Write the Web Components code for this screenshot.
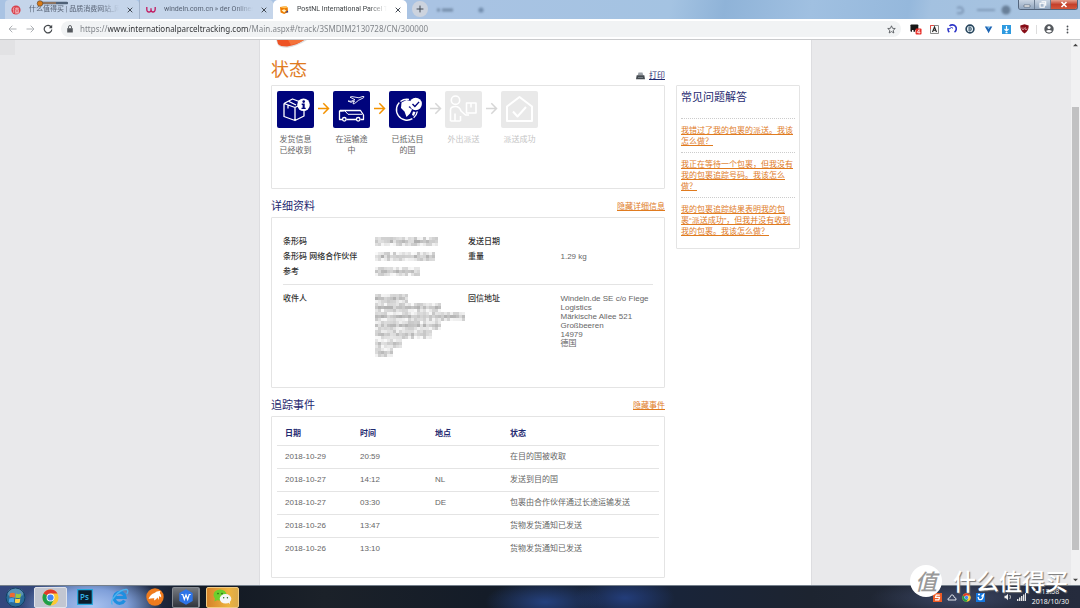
<!DOCTYPE html>
<html lang="zh-CN">
<head>
<meta charset="utf-8">
<title>PostNL International Parcel Tracking</title>
<style>
html,body{margin:0;height:100%}
body{font:8px/11px "Liberation Sans","Noto Sans CJK SC",sans-serif;color:#666;overflow:hidden;
--navy:#1f2a70;--orange:#e07b1f;--line:#e4e4e4;--ui:"Open Sans","Noto Sans CJK SC",sans-serif}
</style>
</head>
<body>
<desktop-screen></desktop-screen>
<script>
function define(name, html, after) {
  const tpl = document.createElement('template');
  tpl.innerHTML = '<style>*{box-sizing:border-box}:host{display:block;box-sizing:border-box}</style>' + html;
  customElements.define(name, class extends HTMLElement {
    constructor() {
      super();
      this.attachShadow({mode: 'open'}).append(tpl.content.cloneNode(true));
    }
    connectedCallback() { if (after) after.call(this, this.shadowRoot); }
  });
}

/* ---------- browser chrome ---------- */
define('browser-tab', `
<style>
:host{flex:0 0 134px;min-width:0;height:19px;display:flex;align-items:center;gap:8px;padding:0 6px 0 6px;color:#566173;font:7px/11px Roboto,"Noto Sans CJK SC",sans-serif;background:#c5d5ea;border-radius:4px 4px 0 0}
:host([active]){background:#fff;color:#3c4043;border-radius:5px 5px 0 0;z-index:1}
:host([divided]){border-left:1px solid #a3b4cc;border-radius:0 4px 0 0}
::slotted(svg){flex:none;width:10px;height:10px}
.t{flex:1;min-width:0;overflow:hidden;white-space:nowrap;-webkit-mask-image:linear-gradient(90deg,#000 80%,transparent);mask-image:linear-gradient(90deg,#000 80%,transparent)}
button{all:unset;flex:none;width:6px;height:11px;display:flex;align-items:center}
button svg{width:6px;height:6px}
</style>
<slot name="icon"></slot><span class="t"><slot></slot></span>
<button aria-label="关闭"><svg viewBox="0 0 6 6"><path d="M.7.7l4.6 4.6M5.3.7L.7 5.3" stroke="#444b55" stroke-width="1"/></svg></button>`);

define('tab-strip', `
<style>
:host{position:relative;flex:none;height:19px;display:flex;padding-left:5px;background:linear-gradient(100deg,#a9c3e3 0 40%,#a4c3e2 62%,#8fb3d8 67%,#a0c0e1 75%,#95b8dc 84%,#a3c1e0 86%,#a9c4e0)}
.new{all:unset;width:16px;height:16px;margin:1px 0 0 5px;border-radius:8px;background:#ccd3de;display:flex;align-items:center;justify-content:center}
.ghost{display:flex;align-items:center;gap:24px;margin-left:8px;filter:blur(1px);opacity:.5}
.ghost svg{display:block}
.g2{margin-left:auto;margin-right:6px}
.win{display:flex;height:10px;margin-right:2px;border:1px solid #53657c;border-top:0;border-radius:0 0 3px 3px;overflow:hidden}
.win button{all:unset;width:15px;display:flex;align-items:center;justify-content:center;background:linear-gradient(#c9d5e3,#91a6bf);border-right:1px solid #6d7e93}
.win .x{width:26px;background:linear-gradient(#e3a08f,#c4402b 50%,#d2563b);border:0}
.recorder{position:absolute;left:36px;top:0;width:32px;height:7px}
</style>
<browser-tab><svg slot="icon" viewBox="0 0 10 10"><circle cx="5" cy="5" r="4.6" fill="#d8404b"/><path d="M3.2 2.2L2 4.6M2.7 4v3.8M4 3.3h4M5.9 2.3v1.6M4.6 4.6h2.8v2.8H4.6zM4.6 6h2.8M4 8.1h4.2" stroke="#fbdcdf" stroke-width=".6" fill="none"/></svg>什么值得买 | 品质消费网站_网购导购</browser-tab>
<browser-tab divided><svg slot="icon" viewBox="0 0 10 10"><path d="M.8 2v2.2Q.8 7 3 7T5 4.5V3.2M5 4.5Q5 7 7 7t2.2-2.8V2" stroke="#c2185f" stroke-width="1.3" fill="none"/></svg>windeln.com.cn » der Onlineshop</browser-tab>
<browser-tab active><svg slot="icon" viewBox="0 0 10 10"><path d="M1 2l6-.8 1.7 1.4L9 7 5.2 9 1.6 7.6z" fill="#ef7d00"/><path d="M1 2.2l4.6 1L8.8 2.6 7 1z" fill="#ffc35b"/><path d="M2.6 5.2l2.6-1 2 1.2-2 2z" fill="#fff3c7"/><path d="M6 7.5l3-2 .2 2z" fill="#2d3a8c"/></svg>PostNL International Parcel Tracking</browser-tab>
<button class="new" aria-label="新标签页"><svg width="8" height="8" viewBox="0 0 8 8"><path d="M4 .6v6.8M.6 4h6.8" stroke="#3e4650"/></svg></button>
<div class="ghost"><svg width="18" height="6" viewBox="0 0 18 6"><path d="M1 3h3M6 3h11" stroke="#40566f" stroke-width="3"/></svg><svg width="6" height="6"><circle cx="3" cy="3" r="2.6" fill="#3f5a7a"/></svg></div>
<div class="ghost g2"><svg width="56" height="10" viewBox="0 0 56 10"><path d="M1 3q5-2 6 2t-6 3M21 5h18" stroke="#5c7290" stroke-width="2" fill="none"/><circle cx="50" cy="5" r="4.5" fill="#2c3d52"/></svg></div>
<div class="win"><button aria-label="最小化"><svg width="8" height="6"><path d="M1 3h6v2H1z" fill="#fff" stroke="#4b586a" stroke-width=".6"/></svg></button><button aria-label="还原"><svg width="8" height="7"><path d="M2.5.8h4.2v4M1 2.3h4.2v4H1z" fill="none" stroke="#fff" stroke-width="1.1"/></svg></button><button class="x" aria-label="关闭"><svg width="8" height="7"><path d="M1.5 1l5 5M6.500 1l-5 5" stroke="#fff" stroke-width="1.6"/></svg></button></div>
<svg class="recorder" viewBox="0 0 32 7"><path d="M4 3h27" stroke="#4e6076" stroke-width="2.4" stroke-linecap="round"/><path d="M6 3h14" stroke="#b98053" stroke-width="1.2"/><circle cx="4" cy="3.500" r="2.8" fill="#d97a17" stroke="#50402f" stroke-width=".6"/></svg>`);

define('address-bar', `
<style>
:host{flex:none;height:21px;display:flex;align-items:center;gap:6px;padding:0 7px 0 6px;background:#fff;border-bottom:1px solid #c9cacc}
button{all:unset;flex:none;width:12px;height:12px;display:flex;align-items:center;justify-content:center}
svg{display:block}
.box{flex:1;display:flex;align-items:center;height:16px;margin-left:1px;border-radius:8px;background:#f1f3f4;padding:0 4px 0 6px}
label{display:flex;width:13px}
input{all:unset;flex:1;min-width:0;height:14px;font:8px/14px "Noto Sans",sans-serif;color:#5f6368;
background:linear-gradient(90deg,#7b7f84 28px,#2b2d30 28px 168px,#7b7f84 168px);-webkit-background-clip:text;background-clip:text;-webkit-text-fill-color:transparent}
.ext{display:flex;gap:6px;align-items:center;padding-left:3px}
.ext .sep{width:1px;height:9px;background:#ddd}
</style>
<button aria-label="后退"><svg width="9" height="8" viewBox="0 0 9 8"><path d="M8.500 4H1M4.300.7L1 4l3.300 3.300" fill="none" stroke="#aeb1b5"/></svg></button>
<button aria-label="前进"><svg width="9" height="8" viewBox="0 0 9 8"><path d="M.5 4H8M4.700.7L8 4 4.700 7.300" fill="none" stroke="#aeb1b5"/></svg></button>
<button aria-label="刷新"><svg width="10" height="10" viewBox="0 0 10 10"><path d="M8.200 3A3.800 3.800 0 1 0 8.800 5.500" fill="none" stroke="#44484c" stroke-width="1.200"/><path d="M9.200.8v3.400H5.800z" fill="#44484c"/></svg></button>
<div class="box">
<label for="u" aria-label="网址"><svg width="6" height="8" viewBox="0 0 6 8"><path d="M.2 3.200h5.600v4.300H.2z" fill="#55595e"/><path d="M1.500 3.400V2a1.500 1.500 0 0 1 3 0v1.400" fill="none" stroke="#55595e" stroke-width=".9"/></svg></label>
<input id="u" value="https://www.internationalparceltracking.com/Main.aspx#/track/3SMDIM2130728/CN/300000">
<button aria-label="收藏"><svg width="9" height="9" viewBox="0 0 10 10"><path d="M5 .9l1.200 2.800 3 .2-2.300 2 .7 3L5 7.300 2.400 8.900l.7-3-2.300-2 3-.2z" fill="none" stroke="#4a4e53" stroke-width=".9"/></svg></button>
</div>
<div class="ext">
<button aria-label="扩展 1"><svg width="13" height="12" viewBox="0 0 13 12"><rect x=".5" y="1" width="8.500" height="8" rx="1" fill="#161616"/><path d="M2.200 7v2.200h1.600V7zM5.500 7v2.200h1.300V7z" fill="#fff"/><rect x="6" y="5.500" width="6.500" height="6.500" rx="1" fill="#e8302a"/><path d="M9.900 6.500v4.600M9.900 6.700L7.700 9.700h3.600" stroke="#fff" stroke-width=".8" fill="none"/></svg></button>
<button aria-label="扩展 2"><svg width="9" height="9" viewBox="0 0 9 9"><path d="M.5.5h8v8h-8z" fill="#fafafa" stroke="#8b8b8b"/><path d="M.5 4V.5H4" stroke="#e34b42" fill="none"/><path d="M2.500 7l2-5 2 5M3.200 5.300h2.600" stroke="#222" stroke-width="1.100" fill="none"/></svg></button>
<button aria-label="扩展 3"><svg width="10" height="10" viewBox="0 0 10 10"><path d="M2.300 8.200A4 4 0 0 1 1.300 4M2.500 2A4 4 0 1 1 7.500 8.200" fill="none" stroke="#2d35c8" stroke-width="1.600"/><path d="M2 5l2.500-1.500L6 4.300" stroke="#2d35c8" stroke-width="1" fill="none"/></svg></button>
<button aria-label="扩展 4"><svg width="10" height="10" viewBox="0 0 10 10"><circle cx="5" cy="5" r="3.900" fill="#e7f1f6" stroke="#26445c" stroke-width="1.600"/><path d="M4 3h1.500L6.500 5 5.500 7H4M4 3v4M4 5h2" stroke="#26445c" fill="none" stroke-width=".8"/></svg></button>
<button aria-label="扩展 5"><svg width="9" height="9" viewBox="0 0 9 9"><path d="M.8 1.500h2.700L4.600 4l1.200-2.500h2.500L5.500 6.500 4.600 8.200 3.700 6.500z" fill="#1d65b4"/><circle cx="4.600" cy="2.300" r="1.100" fill="#71b7ea"/></svg></button>
<button aria-label="扩展 6"><svg width="9" height="9" viewBox="0 0 9 9"><path d="M0 0h9v9H0z" fill="#2d9ae0"/><path d="M4.500 1v4.500M2.500 4l2 2 2-2M3.500 7.700h2" stroke="#fff" stroke-width="1.200" fill="none"/></svg></button>
<button aria-label="扩展 7"><svg width="9" height="10" viewBox="0 0 9 10"><path d="M4.500.3L8.700 1.600q.2 5.600-4.200 8Q.1 7.200.3 1.600z" fill="#870d17"/><path d="M2 3.500v1.200q0 1 1 1t1-1V3.500M7 4.600a1 1 0 1 1-1-1" stroke="#e4b6b9" stroke-width=".8" fill="none"/></svg></button>
<span class="sep"></span>
<button aria-label="用户"><svg width="10" height="10" viewBox="0 0 10 10"><circle cx="5" cy="5" r="4.700" fill="#55595e"/><circle cx="5" cy="3.500" r="1.600" fill="#fff"/><path d="M1.900 7q3.100-2.200 6.200 0-3 3.200-6.200 0z" fill="#fff"/></svg></button>
<button aria-label="菜单"><svg width="3" height="9" viewBox="0 0 3 9"><g fill="#4a4e53"><circle cx="1.500" cy="1.500" r=".9"/><circle cx="1.500" cy="4.500" r=".9"/><circle cx="1.500" cy="7.500" r=".9"/></g></svg></button>
</div>`);

define('scroll-rail', `
<style>
:host{flex:0 0 9px;background:#f1f1f2;display:flex;flex-direction:column;align-items:center;padding:3px 0 3px}
svg{display:block;flex:none;width:5px;height:4px}
i{width:7px;margin:60px 0 28px;flex:1;background:#c1c1c2}
</style>
<svg viewBox="0 0 5 4"><path d="M0 3.300L2.500.7 5 3.300z" fill="#444"/></svg><i></i><svg viewBox="0 0 5 4"><path d="M0 .7L2.500 3.300 5 .7z" fill="#444"/></svg>`);

/* ---------- parcel page ---------- */
define('content-panel', `
<style>:host{background:#fff;border:1px solid var(--line);border-radius:1px}</style><slot></slot>`);

define('section-head', `
<style>
:host{display:flex;justify-content:space-between;align-items:center;height:22px;margin-top:6px}
h2{margin:0;font:11px/16px "Liberation Sans","Noto Sans CJK SC",sans-serif;color:var(--navy)}
a{color:var(--orange);text-decoration:underline}
</style><h2><slot></slot></h2><a href="#"></a>`,
function (r) { r.querySelector('a').textContent = this.getAttribute('action'); });

const STEP_ART = {
  box: '<g fill="none" stroke="#fff" stroke-width="1.300" stroke-linejoin="round"><path d="M7 12.500l8.500-4.500 8 3M7 12.500v13l11 4 9-4.500v-6M7 12.500l11 4v13M18 16.500l4-2M12 10.500l7 3.500M11 14.500v3"/></g><circle cx="26.500" cy="13.800" r="6.300" fill="#fff"/><g fill="#00047c"><circle cx="26.700" cy="10.600" r="1.300"/><path d="M24.700 12.600h3v4.200h1v1.300h-4.200v-1.300h1.100v-2.900h-.9z"/></g>',
  transit: '<g fill="none" stroke="#fff" stroke-linejoin="round"><path d="M15 10l3 .3 4-1.600-5-2.500 2-.6 7 1.200 4-1.500q1.800.2.500 1.500l-5 2.500-4 3.300-1.500.2 1.500-2.700-3.500 1.200z" stroke-width=".9"/><path d="M9 28.500H6.500v-8.500h2l3-.2M13.500 28.500H23M27.500 28.500h3v-4.500l-3-4.500H7" stroke-width="1.300"/><path d="M12 20l3 3.300h14" stroke-width="1"/><circle cx="11.300" cy="28.300" r="1.800" stroke-width="1.300"/><circle cx="25.200" cy="28.300" r="1.800" stroke-width="1.300"/></g>',
  globe: '<path d="M20 8.400A10.500 10.500 0 1 0 28.300 20.500" fill="none" stroke="#fff" stroke-width="1.400" stroke-dasharray="9 1.500 30 1.500"/><path d="M12.500 11.500l5-2.500 4 1 .5 4.500-2.500 1.500 3.500 2.500-2 4-3.500 3.500-2-5.500-3.500-3.500zM24 20.500l2.500.5-1.500 4-2-1z" fill="#fff"/><circle cx="26.700" cy="13" r="6.200" fill="#fff"/><path d="M23.500 13l2.400 2.500 4.200-4.600" fill="none" stroke="#00047c" stroke-width="1.400"/>',
  courier: '<g fill="none" stroke="#fff" stroke-width="1.600" stroke-linejoin="round"><circle cx="10.500" cy="9.200" r="4.200"/><path d="M5.500 30v-11q0-3.500 5-3.500 4 0 5.500 4.500l4.500 4h3.500M15.500 30h-10M10 22.500v7M15.500 25v5"/><path d="M21.500 12h9.500v10h-9.500zM26 12v4.500"/></g>',
  home: '<g fill="none" stroke="#fff" stroke-width="2" stroke-linejoin="round"><path d="M6 30V15.500L18.500 6 31 15.500V30zM12 20.500l4.500 5 8.500-9.500"/></g>'
};
define('track-step', `
<style>
:host{width:37px;text-align:center;color:#666}
svg{display:block;width:37px;height:37px;border-radius:2px;background:#00047c;margin-bottom:6px}
:host([pending]){color:#c4c4c4}
:host([pending]) svg{background:#e9e9e9}
p{margin:0 2px;word-break:break-all}
</style><svg viewBox="0 0 37 37"></svg><p><slot></slot></p>`,
function (r) { r.querySelector('svg').innerHTML = STEP_ART[this.getAttribute('art')]; });

define('step-arrow', `
<style>
:host{width:19px;height:35px;display:flex;align-items:center;justify-content:center;color:#f39200}
:host([pending]){color:#d6d6d6}
</style><svg width="13" height="13" viewBox="0 0 13 13"><path d="M1 6.500h10.500M6.300 1.300l5.200 5.200-5.200 5.200" fill="none" stroke="currentColor" stroke-width="1.500"/></svg>`);

/* Pixelated private value: each attribute entry is the width of one line. */
define('masked-value', `
<style>:host{margin-left:-1px}svg{display:block;overflow:visible}</style><svg></svg>`,
function (r) {
  const widths = this.getAttribute('lines').split(' ').map(Number);
  let seed = 7 + widths[0] * 13 + widths.length * 5, out = '';
  const rnd = () => (seed = (seed * 1103515245 + 12345) % 2147483648) / 2147483648;
  widths.forEach((w, i) => {
    for (let x = 0; x < w; x += 3)
      for (let y = 0; y < 3; y++) {
        const v = Math.round((y === 1 ? 175 : 200) + rnd() * 50);
        out += `<rect x="${x}" y="${i * 9 + y * 3}" width="3" height="3" fill="rgb(${v},${v},${v})"/>`;
      }
  });
  const s = r.querySelector('svg');
  s.setAttribute('width', Math.max(...widths));
  s.setAttribute('height', widths.length * 9);
  s.innerHTML = out;
});

define('parcel-details', `
<style>
:host{padding:16px 11px 0}
dl{margin:0;display:grid;grid-template-columns:repeat(4,1fr)}
dt{color:#333;font-weight:500}
dd{margin:0}
.a{grid-auto-rows:15px;align-items:center;padding-bottom:5px;border-bottom:1px solid var(--line)}
.b{padding-top:9px;line-height:9px;height:102px}
</style>
<dl class="a">
<dt>条形码</dt><dd><masked-value lines="62"></masked-value></dd><dt>发送日期</dt><dd></dd>
<dt>条形码 网络合作伙伴</dt><dd><masked-value lines="60"></masked-value></dd><dt>重量</dt><dd>1.29 kg</dd>
<dt>参考</dt><dd><masked-value lines="45"></masked-value></dd><dt></dt><dd></dd>
</dl>
<dl class="b">
<dt>收件人</dt><dd><masked-value lines="32 66 89 66 56 27 16"></masked-value></dd>
<dt>回信地址</dt><dd>Windeln.de SE c/o Fiege Logistics<br>Märkische Allee 521<br>Großbeeren<br>14979<br>德国</dd>
</dl>`);

define('event-table', `
<style>
:host{padding:5px 5px 17px}
table{width:100%;border-collapse:collapse;table-layout:fixed}
.c{width:75px}
th,td{height:23px;padding:0 8px;text-align:left;border-top:1px solid var(--line)}
th{color:var(--navy);font-weight:700;border:0}
</style>
<table><colgroup><col class="c"><col class="c"><col class="c"><col></colgroup>
<thead><tr><th>日期</th><th>时间</th><th>地点</th><th>状态</th></tr></thead>
<tbody>
<tr><td>2018-10-29</td><td>20:59</td><td></td><td>在目的国被收取</td></tr>
<tr><td>2018-10-27</td><td>14:12</td><td>NL</td><td>发送到目的国</td></tr>
<tr><td>2018-10-27</td><td>03:30</td><td>DE</td><td>包裹由合作伙伴通过长途运输发送</td></tr>
<tr><td>2018-10-26</td><td>13:47</td><td></td><td>货物发货通知已发送</td></tr>
<tr><td>2018-10-26</td><td>13:10</td><td></td><td>货物发货通知已发送</td></tr>
</tbody></table>`);

define('faq-list', `
<style>
:host{padding:3px 4px 6px}
h2{margin:0 0 13px;font:11px/16px "Liberation Sans","Noto Sans CJK SC",sans-serif;color:var(--navy)}
ul{margin:0;padding:0;list-style:none}
li{border-top:1px dotted #ccc;padding:6px 0 5px}
a{color:var(--orange);text-decoration:underline}
</style>
<h2>常见问题解答</h2>
<ul>
<li><a href="#">我错过了我的包裹的派送。我该怎么做？</a></li>
<li><a href="#">我正在等待一个包裹，但我没有我的包裹追踪号码。我该怎么做？</a></li>
<li><a href="#">我的包裹追踪结果表明我的包<br>裹“派送成功”，但我并没有收到我的包裹。我该怎么做？</a></li>
</ul>`);

define('parcel-page', `
<style>
:host{max-width:553px;margin:0 auto;width:100%;height:100%;background:#fff;border:solid #dddde0;border-width:0 1px;padding:0 11px;overflow:hidden}
.logo{display:block;width:33px;height:8px;margin-left:5px}
.cols{display:grid;grid-template-columns:minmax(0,394fr) minmax(0,124fr);column-gap:11px;align-items:start}
.top{display:flex;justify-content:space-between;align-items:flex-end;height:37px;padding-bottom:4px}
h1{margin:0;font:18px/22px "Liberation Sans","Noto Sans CJK SC",sans-serif;color:var(--orange)}
.print{display:flex;align-items:center;gap:4px;color:var(--navy);text-decoration:none}
.print span{text-decoration:underline}
.steps{display:flex;padding:5px 5px 0;height:102px}
aside{padding-top:37px}
</style>
<svg class="logo" viewBox="0 0 33 8"><path d="M0 0h31Q22 6 11 7.800 4 7.800 2 5z" fill="#bbb" opacity=".5"/><path d="M1 0h27Q21 5 11 6.500 4 6.500 2 4z" fill="#ee5224"/><path d="M12 0h16Q22 4 15 5z" fill="#f4733a"/></svg>
<div class="cols">
<main>
<div class="top"><h1>状态</h1><a class="print" href="#"><svg width="9" height="8" viewBox="0 0 9 8"><path d="M2.500.5h4l.8 3H1.700z" fill="#9aa0a6"/><path d="M.7 3.300h7.600L9 7.300H0z" fill="#444a50"/><path d="M2 5.500h5" stroke="#8d949b" stroke-width=".7"/></svg><span>打印</span></a></div>
<content-panel><div class="steps">
<track-step art="box">发货信息已经收到</track-step><step-arrow></step-arrow>
<track-step art="transit">在运输途中</track-step><step-arrow></step-arrow>
<track-step art="globe">已抵达目的国</track-step><step-arrow pending></step-arrow>
<track-step art="courier" pending>外出派送</track-step><step-arrow pending></step-arrow>
<track-step art="home" pending>派送成功</track-step>
</div></content-panel>
<section-head action="隐藏详细信息">详细资料</section-head>
<content-panel><parcel-details></parcel-details></content-panel>
<section-head action="隐藏事件">追踪事件</section-head>
<content-panel><event-table></event-table></content-panel>
</main>
<aside><content-panel><faq-list></faq-list></content-panel></aside>
</div>`);

/* ---------- desktop ---------- */
define('task-bar', `
<style>
:host{flex:none;height:23px;display:flex;align-items:center;padding:0 0 0 2px;color:#fff;border-top:1px solid #75808c;
background:radial-gradient(ellipse 70px 34px at 92px 20px,#a9c3f0 0,#7f9fd9 50%,transparent 100%),
radial-gradient(ellipse 60px 22px at 545px 16px,#25417e,transparent),radial-gradient(ellipse 50px 22px at 625px 12px,#233d7a,transparent),
radial-gradient(ellipse 90px 20px at 960px 12px,#3b4664,transparent),linear-gradient(90deg,#33477e 0,#34466f 9%,#111823 18%,#1b2129 30%,#141c28 45%,#18243b 60%,#1d2430 75%,#252b3d)}
button{all:unset;flex:none;height:22px;width:35px;display:flex;align-items:center;justify-content:center}
.start{width:26px;margin-right:6px}
.on{width:33px;height:21px;border-radius:2px}
.chrome{background:#c2c6d1;border:1px solid #dfe2ea;box-sizing:border-box}
.wps{width:28px;background:linear-gradient(#75797f,#30353d);border:1px solid #858a91;box-sizing:border-box;margin-right:6px;border-right-width:2px}
.wx{background:linear-gradient(90deg,#d5832a,#eeb33e 70%,#d9a94c);border:1px solid #f0cb84;box-sizing:border-box}
.tray{margin-left:auto;display:flex;align-items:center;gap:5px;padding-right:11px}
time{margin-left:1px;font:7px/10px var(--ui);text-align:center}
time span{display:block}
svg{display:block;flex:none}
</style>
<button class="start" aria-label="开始"><svg width="21" height="21" viewBox="0 0 21 21"><circle cx="10.500" cy="10.500" r="10" fill="#286b98"/><ellipse cx="10.500" cy="6" rx="8" ry="5" fill="#79aac7" opacity=".6"/><circle cx="10.500" cy="10.500" r="9.500" fill="none" stroke="#173c61"/><path d="M5 6.500q2.500-1.500 5 0l-.5 4q-2.500-1-5 0z" fill="#ef6a32"/><path d="M11 6.500q2.500 1.300 5 0l-.5 4q-2.500 1-5 0z" fill="#9cc93d"/><path d="M4.300 11.500q2.500-1.200 5 0l-.5 4q-2.500-1-5 0z" fill="#4aa5e8"/><path d="M10.300 11.500q2.500 1 5 0l-.5 4q-2.500 1-5 0z" fill="#fcd14b"/></svg></button>
<button class="on chrome" aria-label="Chrome"><svg width="17" height="17" viewBox="0 0 18 18"><circle cx="9" cy="9" r="8.500" fill="#fcc934"/><path d="M9 9L1.600 4.750A8.500 8.500 0 0 1 16.400 4.750H9z" fill="#e0392c"/><path d="M9 9L1.640 4.750A8.500 8.500 0 0 0 9 17.500L12.700 11z" fill="#1e9e4a"/><circle cx="9" cy="9" r="4.200" fill="#fff"/><circle cx="9" cy="9" r="3.300" fill="#4285f4"/></svg></button>
<button aria-label="Photoshop"><svg width="16" height="16" viewBox="0 0 16 16"><path d="M.7.7h14.600v14.600H.7z" fill="#0a1d2c" stroke="#25a9de" stroke-width="1.200"/><text x="3" y="11" font-family="Open Sans" font-size="8" font-weight="600" fill="#35b4ea">Ps</text></svg></button>
<button aria-label="Internet Explorer"><svg width="19" height="18" viewBox="0 0 19 18"><path d="M14.500 12.500A5.500 5.500 0 1 1 15.200 9.500H5.500" fill="none" stroke="#1f8fe0" stroke-width="3.200"/><path d="M2.500 16.500C-1 13 9 1 16.500 1.500q2.500.7.300 4.500" fill="none" stroke="#4db4f0" stroke-width="1.400"/></svg></button>
<button aria-label="浏览器"><svg width="18" height="18" viewBox="0 0 18 18"><circle cx="9" cy="9" r="8.700" fill="#ef7b1d"/><path d="M2.500 11q2-5 6-6 2-2.200 6-2-1 1.200-.5 2.500 1.500 1.200 1.200 4l-2-1.500-.5 4-1.200-2.500q-1 2-3.500 3l.3-2.300q-3.500-.2-5.800.8z" fill="#fff"/></svg></button>
<button class="on wps" aria-label="WPS"><svg width="16" height="16" viewBox="0 0 16 16"><path d="M8 .3l6.700 3.800v7.800L8 15.700 1.300 11.900V4.100z" fill="#2d74e8"/><path d="M3.300 5.500h1.500l1.500 5L8 6l1.700 4.500 1.500-5h1.500" fill="none" stroke="#fff" stroke-width="1.200"/></svg></button>
<button class="on wx" aria-label="微信"><svg width="19" height="16" viewBox="0 0 19 16"><ellipse cx="7" cy="6" rx="6.500" ry="5.500" fill="#6bcf2d"/><path d="M2 9l-.5 3.500L5 10.500z" fill="#6bcf2d"/><ellipse cx="12.500" cy="9.800" rx="5.800" ry="4.800" fill="#f6f6f6"/><path d="M15 13l2 2.300-.3-3.300z" fill="#f6f6f6"/><g fill="#24661a"><circle cx="5" cy="4.600" r=".8"/><circle cx="9" cy="4.600" r=".8"/><circle cx="10.700" cy="8.700" r=".7"/><circle cx="14.400" cy="8.700" r=".7"/></g></svg></button>
<div class="tray">
<svg width="9" height="9" viewBox="0 0 9 9"><path d="M0 0h9v9H0z" fill="#ee5a24"/><path d="M6.800 2.200H3.200L2.500 4.300h4L5.800 6.800H2" stroke="#fff" stroke-width="1.200" fill="none"/></svg>
<svg width="10" height="9" viewBox="0 0 10 9"><path d="M1 7q-.5-2 1.800-2.300Q3.500 2 5 1.800 7 2 7.200 4.300 9.500 4.800 9 7z" fill="none" stroke="#dfe3ea"/></svg>
<svg width="9" height="9" viewBox="0 0 18 18"><circle cx="9" cy="9" r="8.500" fill="#fcc934"/><path d="M9 9L1.600 4.750A8.500 8.500 0 0 1 16.400 4.750H9z" fill="#e0392c"/><path d="M9 9L1.640 4.750A8.500 8.500 0 0 0 9 17.500L12.700 11z" fill="#1e9e4a"/><circle cx="9" cy="9" r="4.200" fill="#fff"/><circle cx="9" cy="9" r="3.300" fill="#4285f4"/></svg>
<svg width="9" height="9" viewBox="0 0 9 9"><path d="M0 0h9v9H0z" fill="#1476dd"/><path d="M2 1.500h2M2 4l1 2.500q3 1 4-2.500L7.500 1.500 5.500 3.500" fill="none" stroke="#fff" stroke-width="1.300"/></svg>
<svg width="9" height="1"></svg>
<svg width="8" height="8" viewBox="0 0 8 8"><path d="M.5 2.700h1.500L4 .8v6.400L2 5.300H.5z" fill="#eee"/><path d="M5.800 2q1.500 2 0 4" stroke="#bbb" fill="none"/></svg>
<svg width="9" height="8" viewBox="0 0 9 8"><path d="M0 6h1.400v2H0zM2 4.500h1.400V8H2zM4 3h1.400v5H4zM6 1.500h1.400V8H6zM8 0h1v8H8z" fill="#e6e6e6"/></svg>
<time><span>13:58</span><span>2018/10/30</span></time>
</div>`);

define('water-mark', `
<style>
:host{position:absolute;right:12px;bottom:11px;display:flex;align-items:center;gap:11px;color:#fff;pointer-events:none;font:23px/23px "Noto Sans CJK SC",sans-serif;text-shadow:1px 1px 1px #777}
b{width:32px;height:32px;border-radius:50%;background:#fff;color:#999;font-weight:500;font-style:italic;font-size:22px;line-height:31px;text-align:center;text-shadow:none}
span{font-weight:500;padding-bottom:2px}
</style><b>值</b><span>什么值得买</span>`);

define('desktop-screen', `
<style>
:host{position:relative;height:100vh;display:flex;flex-direction:column;overflow:hidden}
.view{flex:1;min-height:0;display:flex;background:#e9e9eb}
.doc{position:relative;flex:1;min-width:0}
.hint{position:absolute;left:0;top:0;width:15px;height:15px;background:#e2e2e4}
</style>
<tab-strip></tab-strip><address-bar></address-bar>
<div class="view"><div class="doc"><span class="hint"></span><parcel-page></parcel-page></div><scroll-rail></scroll-rail></div>
<task-bar></task-bar><water-mark></water-mark>`);
</script>
</body>
</html>
